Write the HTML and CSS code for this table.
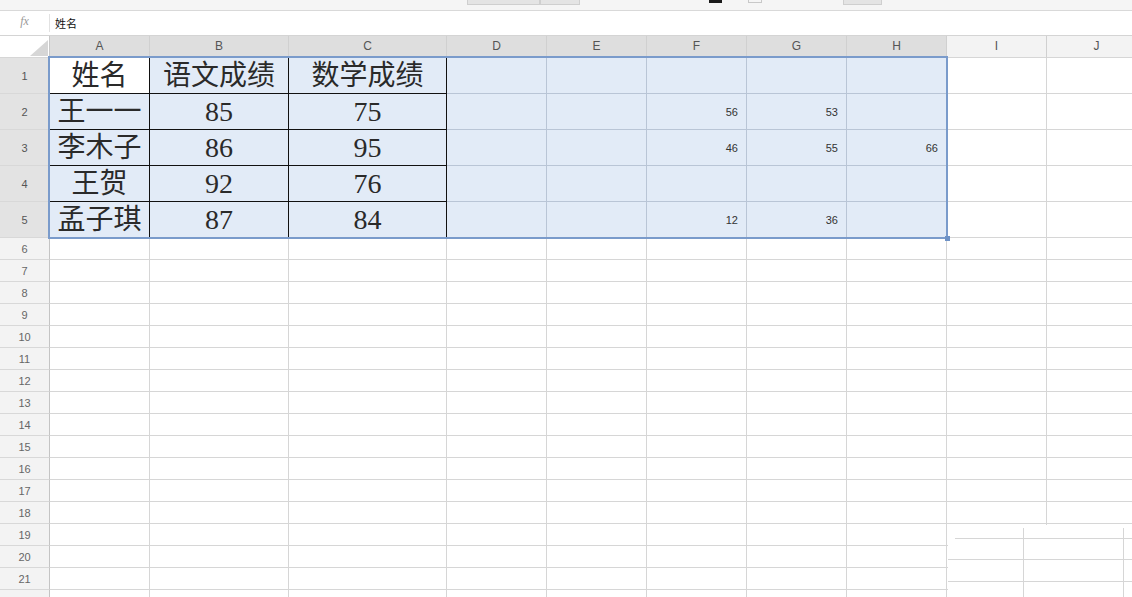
FILE: index.html
```html
<!DOCTYPE html>
<html lang="zh">
<head>
<meta charset="utf-8">
<title>Sheet</title>
<link rel="stylesheet" href="styles.css">
</head>
<body>
<div class="app">
  <div class="toolbar">
    <span class="tb-seg tb-seg1"></span><span class="tb-seg tb-seg2"></span>
    <span class="tb-black"></span>
    <span class="tb-box"></span>
    <span class="tb-seg tb-seg3"></span>
  </div>
  <div class="formula">
    <div class="fx">fx</div>
    <div class="fvalue">姓名</div>
  </div>
  <div class="sheet">
    <div class="row hdr">
      <div class="corner"><svg width="18" height="16" viewBox="0 0 18 16"><polygon points="18,0 18,16 0,16" fill="#d6d6d6"/></svg></div>
      <div class="ch on">A</div><div class="ch on">B</div><div class="ch on">C</div><div class="ch on">D</div><div class="ch on">E</div><div class="ch on">F</div><div class="ch on">G</div><div class="ch on">H</div><div class="ch">I</div><div class="ch">J</div>
    </div>
    <div class="row tall">
      <div class="rh on">1</div>
      <div class="c t big active">姓名</div><div class="c t big">语文成绩</div><div class="c t big">数学成绩</div>
      <div class="c s"></div><div class="c s"></div><div class="c s"></div><div class="c s"></div><div class="c s"></div><div class="c"></div><div class="c"></div>
    </div>
    <div class="row tall">
      <div class="rh on">2</div>
      <div class="c t big">王一一</div><div class="c t big">85</div><div class="c t big">75</div>
      <div class="c s"></div><div class="c s"></div><div class="c s num">56</div><div class="c s num">53</div><div class="c s"></div><div class="c"></div><div class="c"></div>
    </div>
    <div class="row tall">
      <div class="rh on">3</div>
      <div class="c t big">李木子</div><div class="c t big">86</div><div class="c t big">95</div>
      <div class="c s"></div><div class="c s"></div><div class="c s num">46</div><div class="c s num">55</div><div class="c s num">66</div><div class="c"></div><div class="c"></div>
    </div>
    <div class="row tall">
      <div class="rh on">4</div>
      <div class="c t big">王贺</div><div class="c t big">92</div><div class="c t big">76</div>
      <div class="c s"></div><div class="c s"></div><div class="c s"></div><div class="c s"></div><div class="c s"></div><div class="c"></div><div class="c"></div>
    </div>
    <div class="row tall">
      <div class="rh on">5</div>
      <div class="c t big">孟子琪</div><div class="c t big">87</div><div class="c t big">84</div>
      <div class="c s"></div><div class="c s"></div><div class="c s num">12</div><div class="c s num">36</div><div class="c s"></div><div class="c"></div><div class="c"></div>
    </div>
    <div class="row"><div class="rh">6</div><div class="c"></div><div class="c"></div><div class="c"></div><div class="c"></div><div class="c"></div><div class="c"></div><div class="c"></div><div class="c"></div><div class="c"></div><div class="c"></div></div>
    <div class="row"><div class="rh">7</div><div class="c"></div><div class="c"></div><div class="c"></div><div class="c"></div><div class="c"></div><div class="c"></div><div class="c"></div><div class="c"></div><div class="c"></div><div class="c"></div></div>
    <div class="row"><div class="rh">8</div><div class="c"></div><div class="c"></div><div class="c"></div><div class="c"></div><div class="c"></div><div class="c"></div><div class="c"></div><div class="c"></div><div class="c"></div><div class="c"></div></div>
    <div class="row"><div class="rh">9</div><div class="c"></div><div class="c"></div><div class="c"></div><div class="c"></div><div class="c"></div><div class="c"></div><div class="c"></div><div class="c"></div><div class="c"></div><div class="c"></div></div>
    <div class="row"><div class="rh">10</div><div class="c"></div><div class="c"></div><div class="c"></div><div class="c"></div><div class="c"></div><div class="c"></div><div class="c"></div><div class="c"></div><div class="c"></div><div class="c"></div></div>
    <div class="row"><div class="rh">11</div><div class="c"></div><div class="c"></div><div class="c"></div><div class="c"></div><div class="c"></div><div class="c"></div><div class="c"></div><div class="c"></div><div class="c"></div><div class="c"></div></div>
    <div class="row"><div class="rh">12</div><div class="c"></div><div class="c"></div><div class="c"></div><div class="c"></div><div class="c"></div><div class="c"></div><div class="c"></div><div class="c"></div><div class="c"></div><div class="c"></div></div>
    <div class="row"><div class="rh">13</div><div class="c"></div><div class="c"></div><div class="c"></div><div class="c"></div><div class="c"></div><div class="c"></div><div class="c"></div><div class="c"></div><div class="c"></div><div class="c"></div></div>
    <div class="row"><div class="rh">14</div><div class="c"></div><div class="c"></div><div class="c"></div><div class="c"></div><div class="c"></div><div class="c"></div><div class="c"></div><div class="c"></div><div class="c"></div><div class="c"></div></div>
    <div class="row"><div class="rh">15</div><div class="c"></div><div class="c"></div><div class="c"></div><div class="c"></div><div class="c"></div><div class="c"></div><div class="c"></div><div class="c"></div><div class="c"></div><div class="c"></div></div>
    <div class="row"><div class="rh">16</div><div class="c"></div><div class="c"></div><div class="c"></div><div class="c"></div><div class="c"></div><div class="c"></div><div class="c"></div><div class="c"></div><div class="c"></div><div class="c"></div></div>
    <div class="row"><div class="rh">17</div><div class="c"></div><div class="c"></div><div class="c"></div><div class="c"></div><div class="c"></div><div class="c"></div><div class="c"></div><div class="c"></div><div class="c"></div><div class="c"></div></div>
    <div class="row"><div class="rh">18</div><div class="c"></div><div class="c"></div><div class="c"></div><div class="c"></div><div class="c"></div><div class="c"></div><div class="c"></div><div class="c"></div><div class="c"></div><div class="c"></div></div>
    <div class="row"><div class="rh">19</div><div class="c"></div><div class="c"></div><div class="c"></div><div class="c"></div><div class="c"></div><div class="c"></div><div class="c"></div><div class="c"></div><div class="c"></div><div class="c"></div></div>
    <div class="row"><div class="rh">20</div><div class="c"></div><div class="c"></div><div class="c"></div><div class="c"></div><div class="c"></div><div class="c"></div><div class="c"></div><div class="c"></div><div class="c"></div><div class="c"></div></div>
    <div class="row"><div class="rh">21</div><div class="c"></div><div class="c"></div><div class="c"></div><div class="c"></div><div class="c"></div><div class="c"></div><div class="c"></div><div class="c"></div><div class="c"></div><div class="c"></div></div>
    <div class="row"><div class="rh"></div><div class="c"></div><div class="c"></div><div class="c"></div><div class="c"></div><div class="c"></div><div class="c"></div><div class="c"></div><div class="c"></div><div class="c"></div><div class="c"></div></div>

    <div class="selection"><span class="handle"></span></div>
    <div class="glitch">
      <span class="gl-h gl-h1"></span><span class="gl-h gl-h2"></span><span class="gl-h gl-h3"></span>
      <span class="gl-v gl-v1"></span><span class="gl-v gl-v2"></span>
    </div>
  </div>
</div>
</body>
</html>
```

FILE: styles.css
```css
html, body {
  margin: 0;
  padding: 0;
  background: #fff;
  overflow: hidden;
}
.app {
  width: 1132px;
  height: 597px;
  overflow: hidden;
  font-family: "Liberation Sans", Arial, "Noto Sans CJK SC", sans-serif;
}
.toolbar {
  height: 10px;
  background: #f5f5f5;
  border-bottom: 1px solid #d9d9d9;
  display: flex;
  align-items: flex-start;
  overflow: hidden;
}
.tb-seg {
  height: 5px;
  background: #e4e4e4;
  border: 1px solid #cfcfcf;
  border-top: none;
  box-sizing: border-box;
}
.tb-seg1 { margin-left: 467px; width: 73px; }
.tb-seg2 { width: 40px; }
.tb-black {
  margin-left: 129px;
  width: 13px;
  height: 3px;
  background: #1a1a1a;
}
.tb-box {
  margin-left: 26px;
  width: 14px;
  height: 3px;
  border: 1px solid #c8c8c8;
  border-top: none;
  box-sizing: border-box;
}
.tb-seg3 { margin-left: 81px; width: 39px; }

.formula {
  height: 24px;
  border-bottom: 1px solid #d4d4d4;
  display: flex;
  align-items: center;
}
.fx {
  width: 49px;
  height: 18px;
  border-right: 1px solid #e2e2e2;
  font-family: "Liberation Serif", serif;
  font-style: italic;
  font-size: 12px;
  color: #999;
  text-align: center;
  line-height: 14px;
}
.fvalue {
  padding-left: 5px;
  font-family: "Noto Sans CJK SC", sans-serif;
  font-size: 11px;
  color: #111;
  line-height: 24px;
}

.sheet {
  position: relative;
}
.row {
  display: grid;
  grid-template-columns: 50px 100px 139px 158px repeat(7, 100px);
  height: 22px;
}
.row.hdr { height: 22px; }
.row.tall { height: 36px; }
.row > div {
  box-sizing: border-box;
  border-right: 1px solid #d6d6d6;
  border-bottom: 1px solid #d6d6d6;
  overflow: hidden;
  white-space: nowrap;
}
.corner {
  background: #fff;
  display: flex;
  align-items: flex-end;
  justify-content: flex-end;
  padding: 0 1px 1px 0;
  border-right-color: #c8c8c8 !important;
}
.ch {
  background: #f3f3f3;
  color: #555;
  font-size: 12px;
  text-align: center;
  line-height: 21px;
  border-right-color: #d0d0d0 !important;
}
.ch.on { background: #dedede; }
.rh {
  background: #f3f3f3;
  color: #666;
  font-size: 11px;
  display: flex;
  align-items: center;
  justify-content: center;
  border-right-color: #c4c4c4 !important;
  border-bottom-color: #d8d8d8 !important;
}
.rh.on { background: #e3e3e3; color: #555; }
.c { background: #fff; }
.c.s {
  background: #e2ebf7;
  border-right-color: #b9c5d6;
  border-bottom-color: #b9c5d6;
}
.c.t {
  background: #e2ebf7;
  border-right: 1px solid #111;
  border-bottom: 1px solid #111;
}
.c.t.active { background: #fff; }
.big {
  font-family: "Liberation Serif", "Noto Sans CJK SC", serif;
  font-size: 28px;
  color: #2a2a2a;
  display: flex;
  align-items: center;
  justify-content: center;
  line-height: 1;
}
.num {
  font-size: 11px;
  color: #333;
  display: flex;
  align-items: center;
  justify-content: flex-end;
  padding-right: 8px;
}

.selection {
  position: absolute;
  left: 48px;
  top: 20px;
  width: 900px;
  height: 183px;
  border: 2px solid #7a9bcb;
  box-sizing: border-box;
  pointer-events: none;
}
.handle {
  position: absolute;
  right: -4px;
  bottom: -4px;
  width: 5px;
  height: 5px;
  background: #6e92c6;
}

.glitch {
  position: absolute;
  left: 948px;
  top: 489px;
  width: 184px;
  height: 80px;
  background: #fff;
}
.gl-h {
  position: absolute;
  right: 0;
  height: 1px;
  background: #d6d6d6;
}
.gl-h1 { top: 13px; left: 7px; }
.gl-h2 { top: 34px; left: 0; }
.gl-h3 { top: 56px; left: 0; }
.gl-v {
  position: absolute;
  top: 3px;
  bottom: 0;
  width: 1px;
  background: #d6d6d6;
}
.gl-v1 { left: 75px; }
.gl-v2 { left: 175px; }
```
